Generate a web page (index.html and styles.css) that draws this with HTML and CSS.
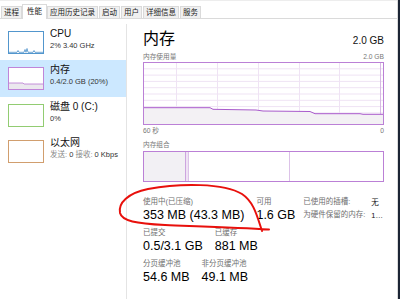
FILE: index.html
```html
<!DOCTYPE html>
<html lang="zh-CN">
<head>
    <meta charset="UTF-8">
    <meta name="viewport" content="width=device-width, initial-scale=1.0">
    <title>任务管理器</title>
    <link rel="stylesheet" href="styles.css">
</head>
<body>
<div class="page">
    <div class="window">
        <div class="tabs">
            <span class="tab">进程</span>
            <span class="tab active">性能</span>
            <span class="tab">应用历史记录</span>
            <span class="tab">启动</span>
            <span class="tab">用户</span>
            <span class="tab">详细信息</span>
            <span class="tab">服务</span>
        </div>
        <div class="body">
            <div class="side">
                <div class="item">
                    <div class="thumb cpu">
                        <svg viewBox="0 0 34 21" preserveAspectRatio="none">
                            <polyline points="0,20.3 8,20.3 9,18.5 10,20.3 15,20.3 16,17.5 17,20.3 18,16.5 19,20.3 24,20.3 25,18.5 26,20.3 34,20.3" fill="none" stroke="#4a8fc9" stroke-width="0.8"/>
                        </svg>
                    </div>
                    <div class="info">
                        <div class="name">CPU</div>
                        <div class="sub">2% 3.40 GHz</div>
                    </div>
                </div>
                <div class="item selected">
                    <div class="thumb mem">
                        <svg viewBox="0 0 34 21" preserveAspectRatio="none">
                            <polygon points="0,15 14,15 15,16 34,16 34,21 0,21" fill="#ebe8ee"/>
                            <polyline points="0,15 14,15 15,16 34,16" fill="none" stroke="#b777d2" stroke-width="0.8"/>
                        </svg>
                    </div>
                    <div class="info">
                        <div class="name">内存</div>
                        <div class="sub">0.4/2.0 GB (20%)</div>
                    </div>
                </div>
                <div class="item">
                    <div class="thumb disk"></div>
                    <div class="info">
                        <div class="name">磁盘 0 (C:)</div>
                        <div class="sub">0%</div>
                    </div>
                </div>
                <div class="item">
                    <div class="thumb eth"></div>
                    <div class="info">
                        <div class="name">以太网</div>
                        <div class="sub"><span class="dim">发送:</span> 0 <span class="dim">接收:</span> 0 Kbps</div>
                    </div>
                </div>
            </div>

            <div class="panel">
                <div class="head">
                    <span class="title">内存</span>
                    <span class="total">2.0 GB</span>
                </div>
                <div class="caption">
                    <span>内存使用量</span>
                    <span>2.0 GB</span>
                </div>
                <svg class="chart" width="241" height="63" viewBox="0 0 241 63">
                    <g stroke="#efe3f4" stroke-width="1">
                        <line x1="0" y1="6.8" x2="241" y2="6.8"/>
                        <line x1="0" y1="13.1" x2="241" y2="13.1"/>
                        <line x1="0" y1="19.4" x2="241" y2="19.4"/>
                        <line x1="0" y1="25.7" x2="241" y2="25.7"/>
                        <line x1="0" y1="32" x2="241" y2="32"/>
                        <line x1="0" y1="38.3" x2="241" y2="38.3"/>
                        <line x1="0" y1="44.6" x2="241" y2="44.6"/>
                        <line x1="0" y1="50.9" x2="241" y2="50.9"/>
                        <line x1="0" y1="57.2" x2="241" y2="57.2"/>
                        <line x1="33.5" y1="0" x2="33.5" y2="63"/>
                        <line x1="74.5" y1="0" x2="74.5" y2="63"/>
                        <line x1="115.5" y1="0" x2="115.5" y2="63"/>
                        <line x1="156.5" y1="0" x2="156.5" y2="63"/>
                        <line x1="196.5" y1="0" x2="196.5" y2="63"/>
                        <line x1="237.5" y1="0" x2="237.5" y2="63" stroke="#d7b9e4"/>
                    </g>
                    <polygon points="0,45.7 67,45.7 70,47.3 113,48 120,49 167,49.5 172,51.7 217,51.7 220,52.3 241,52.3 241,63 0,63" fill="#f3f1f4"/>
                    <polyline points="0,45.7 67,45.7 70,47.3 113,48 120,49 167,49.5 172,51.7 217,51.7 220,52.3 241,52.3" fill="none" stroke="#a95bcc" stroke-width="1"/>
                    <rect x="0.5" y="0.5" width="240" height="62" fill="none" stroke="#bb80d6" stroke-width="1"/>
                </svg>
                <div class="caption axis">
                    <span>60 秒</span>
                    <span>0</span>
                </div>
                <div class="caption">
                    <span>内存组合</span>
                </div>
                <div class="combo">
                    <div class="seg used"></div>
                    <div class="seg modified"></div>
                    <div class="seg standby"></div>
                    <div class="seg free"></div>
                </div>

                <div class="stats">
                    <div class="row">
                        <div class="stat">
                            <div class="lbl">使用中(已压缩)</div>
                            <div class="val">353 MB (43.3 MB)</div>
                        </div>
                        <div class="stat">
                            <div class="lbl">可用</div>
                            <div class="val">1.6 GB</div>
                        </div>
                        <div class="extra">
                            <span class="lbl">已使用的插槽:</span>
                            <span>无</span>
                            <span class="lbl">为硬件保留的内存:</span>
                            <span>1…</span>
                        </div>
                    </div>
                    <div class="row">
                        <div class="stat">
                            <div class="lbl">已提交</div>
                            <div class="val">0.5/3.1 GB</div>
                        </div>
                        <div class="stat">
                            <div class="lbl">已缓存</div>
                            <div class="val">881 MB</div>
                        </div>
                    </div>
                    <div class="row">
                        <div class="stat">
                            <div class="lbl">分页缓冲池</div>
                            <div class="val">54.6 MB</div>
                        </div>
                        <div class="stat">
                            <div class="lbl">非分页缓冲池</div>
                            <div class="val">49.1 MB</div>
                        </div>
                    </div>
                </div>
            </div>
        </div>
    </div>
    <div class="desk"></div>

    <!-- hand drawn red mark on top of the page -->
    <svg class="mark" width="400" height="299" viewBox="0 0 400 299">
        <path d="M262 231 C257 216 254 202 242 194 C224 183 180 183 148 189 C128 193 118 203 120 213 C122 221 136 223.5 165 225 C205 226.5 240 227.5 269 229.5" fill="none" stroke="#e8100c" stroke-width="2" stroke-linecap="round"/>
    </svg>
</div>
</body>
</html>
```

FILE: styles.css
```css
* {box-sizing: border-box;}
body {margin: 0; background: #fff; font-family: "Liberation Sans", "Noto Sans CJK SC", sans-serif; color: #1a1a1a;}

.page {position: relative; display: flex; width: 400px; height: 299px; overflow: hidden;}
.window {width: 398px; height: 299px; border-right: 1px solid #dcdcdc; display: flex; flex-direction: column;}
.desk {width: 2px; background: #1c2535;}
.mark {position: absolute; top: 0; left: 0; pointer-events: none;}

/* tabs */
.tabs {height: 19px; border-top: 1px solid #ededed; border-bottom: 1px solid #dadada; display: flex; align-items: flex-end; gap: 1px; padding-left: 1px;}
.tab {font-size: 7.5px; line-height: 11px; height: 12px; padding: 0 2px; background: #f0f0f0; border: 1px solid #dadada; border-bottom: none; color: #222; white-space: nowrap;}
.tab.active {background: #fff; height: 15px; line-height: 13px; padding: 0 4px; margin: 0 -1px -1px; position: relative;}

/* left list */
.body {flex: 1; display: flex;}
.side {width: 127px; margin-top: 5px; border-right: 1px solid #e4e4e4;}
.item {height: 36px; display: flex; gap: 6px; padding: 7px 0 0 8px;}
.item.selected {background: #cce8ff; height: 37px;}
.thumb {width: 36px; height: 23px; border: 1px solid; background: #fff;}
.thumb svg {display: block; width: 34px; height: 21px;}
.thumb.cpu {border-color: #5296cd;}
.thumb.mem {border-color: #c085d9;}
.thumb.disk {border-color: #92cc72;}
.thumb.eth {border-color: #d19e6e;}
.name {font-size: 10px; line-height: 12px; margin-top: -3px; color: #111; white-space: nowrap;}
.sub {font-size: 7.5px; line-height: 10px; margin-top: 1px; color: #333; white-space: nowrap;}
.sub .dim {color: #8a8a8a;}

/* right panel */
.panel {flex: 1; padding: 0 13px 0 16px;}
.head {height: 28px; display: flex; justify-content: space-between; align-items: baseline; padding-top: 12px;}
.title {font-size: 16px; line-height: 16px; color: #000;}
.total {font-size: 10px; line-height: 12px; color: #111;}
.caption {display: flex; justify-content: space-between; font-size: 6.7px; line-height: 9px; color: #777; margin-top: 5px;}
.caption.axis {margin-top: 1px;}
.chart {display: block; margin-top: 1px;}
.combo {display: flex; height: 31px; margin-top: 2px; border: 1px solid #bb80d6;}
.seg {height: 100%;}
.used {width: 42px; background: #f2f0f4; border-right: 1px solid #cda5df;}
.modified {width: 3px; background: #efe3f4; border-right: 1px solid #dcc2e8;}
.standby {width: 101px; border-right: 1px solid #dcc2e8;}
.free {flex: 1;}

.stats {margin-top: 15px; display: flex; flex-direction: column; gap: 6px;}
.row {display: flex; gap: 12px;}
.lbl {font-size: 7.5px; line-height: 10px; color: #6e6e6e; white-space: nowrap;}
.val {font-size: 12.5px; line-height: 14px; margin-top: 1px; color: #000; white-space: nowrap;}
.extra {display: grid; grid-template-columns: 68px auto; font-size: 7.5px; line-height: 11px; margin-left: -4px; color: #111;}
```
